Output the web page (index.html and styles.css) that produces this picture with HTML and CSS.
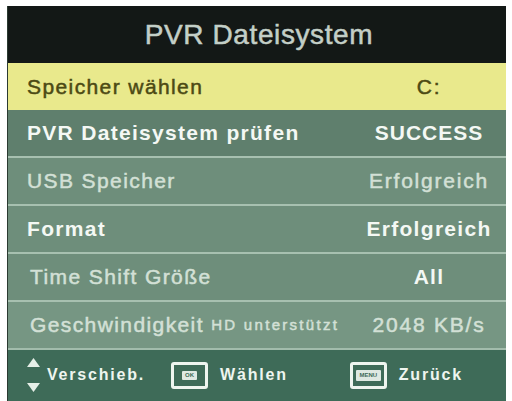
FILE: index.html
```html
<!DOCTYPE html>
<html lang="de">
<head>
<meta charset="utf-8">
<title>PVR Dateisystem</title>
<link rel="stylesheet" href="styles.css">
</head>
<body>
<div class="panel">
  <div class="header">PVR Dateisystem</div>
  <div class="row selected"><span class="label">Speicher wählen</span><span class="value">C:</span></div>
  <div class="row dark"><span class="label strong">PVR Dateisystem prüfen</span><span class="value strong tight">SUCCESS</span></div>
  <div class="row"><span class="label dim">USB Speicher</span><span class="value dim">Erfolgreich</span></div>
  <div class="row"><span class="label strong">Format</span><span class="value strong">Erfolgreich</span></div>
  <div class="row"><span class="label dim shift">Time Shift Größe</span><span class="value strong">All</span></div>
  <div class="row light"><span class="label dim shift">Geschwindigkeit <span class="small">HD unterstützt</span></span><span class="value dim">2048 KB/s</span></div>
  <div class="footer">
    <svg class="arrows" width="15" height="36" viewBox="0 0 15 36"><polygon points="7.5,1 14,10 1,10" fill="#e6efe8"/><polygon points="1,26 14,26 7.5,35" fill="#e6efe8"/></svg>
    <span class="ftext move">Verschieb.</span>
    <span class="key ok"><span class="keyin">OK</span></span>
    <span class="ftext choose">Wählen</span>
    <span class="key menu"><span class="keyin wide">MENU</span></span>
    <span class="ftext">Zurück</span>
  </div>
</div>
</body>
</html>
```
FILE: styles.css
```css
html, body {
  margin: 0;
  padding: 0;
  background: #ffffff;
}
body {
  font-family: "Liberation Sans", Arial, sans-serif;
}
.panel {
  margin: 6px 0 0 7px;
  width: 499px;
  height: 395px;
  display: flex;
  flex-direction: column;
  border-left: 1px solid #2b3a31;
  box-sizing: border-box;
  overflow: hidden;
  background: #6d8d7a;
}
.header {
  height: 57px;
  background: #131816;
  color: #c3cfc7;
  font-size: 28px;
  letter-spacing: 0.6px;
  -webkit-text-stroke: 0.5px #c3cfc7;
  display: flex;
  align-items: center;
  justify-content: center;
  padding-left: 4px;
}
.row {
  height: 48px;
  flex: 0 0 48px;
  box-sizing: border-box;
  display: flex;
  align-items: center;
  background: #6e8e7b;
  border-bottom: 2px solid #a7c0b0;
  font-size: 21px;
  color: #eef4ef;
}
.row.selected {
  height: 47px;
  flex-basis: 47px;
  background: #e9e98c;
  color: #4c4a14;
  border-bottom: 0;
}
.row.selected .label,
.row.selected .value {
  -webkit-text-stroke: 0.5px #4c4a14;
}
.row.dark {
  background: #5f7f6d;
}
.row.light {
  background: #769683;
  border-bottom: 2px solid #a2bcac;
}
.label {
  flex: 1;
  padding-left: 19px;
  letter-spacing: 1.4px;
  white-space: nowrap;
}
.label.shift {
  padding-left: 22px;
}
.value {
  width: 142px;
  margin-right: 6px;
  text-align: center;
  letter-spacing: 1.8px;
  white-space: nowrap;
}
.strong {
  font-weight: bold;
  color: #f4f8f4;
  letter-spacing: 1.3px;
}
.tight {
  letter-spacing: 1px;
}
.dim {
  color: #d3e0d6;
  -webkit-text-stroke: 0.5px #d3e0d6;
}
.small {
  font-size: 15px;
  letter-spacing: 2.3px;
  position: relative;
  top: -2px;
}
.footer {
  flex: 1;
  background: #3e6b58;
  display: flex;
  align-items: center;
  padding-left: 18px;
  padding-bottom: 2px;
}
.arrows {
  margin-right: 6px;
}
.ftext {
  font-size: 16px;
  font-weight: bold;
  color: #eef5ef;
  letter-spacing: 1.8px;
  white-space: nowrap;
}
.move {
  margin-right: 26px;
}
.choose {
  margin-right: 62px;
}
.key {
  width: 37px;
  height: 27px;
  box-sizing: border-box;
  border: 3px solid #eef5ef;
  border-radius: 3px;
  display: flex;
  align-items: center;
  justify-content: center;
  margin-right: 12px;
  margin-top: 2px;
}
.keyin {
  background: #dfe9e2;
  color: #3e6b58;
  font-size: 6px;
  font-weight: bold;
  padding: 1px 3px;
  border-radius: 1px;
  line-height: 7px;
}
.keyin.wide {
  width: 21px;
  padding: 2px 2px;
  text-align: center;
}
```
